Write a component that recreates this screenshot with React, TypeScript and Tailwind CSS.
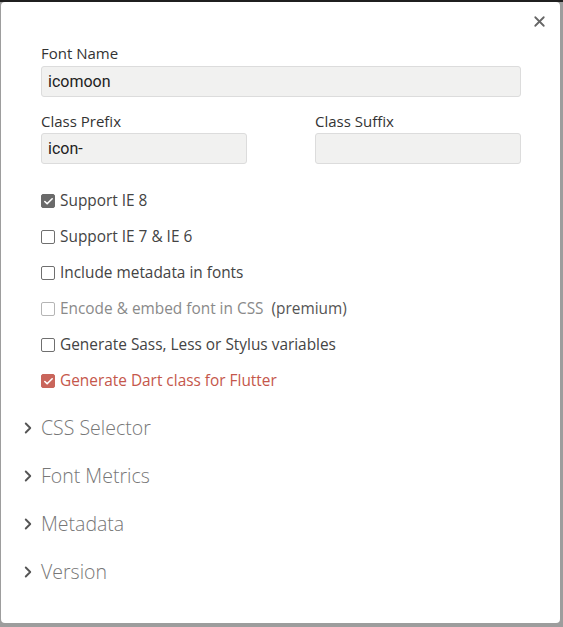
import { ChevronRight, X, Check } from 'lucide-react'

type Opt = {
  label: React.ReactNode
  checked?: boolean
  tone?: 'dark' | 'red' | 'disabled'
}

const options: Opt[] = [
  { label: 'Support IE 8', checked: true, tone: 'dark' },
  { label: 'Support IE 7 & IE 6' },
  { label: 'Include metadata in fonts' },
  {
    label: (
      <>
        Encode &amp; embed font in CSS <span className="ml-1 text-[#555]">(premium)</span>
      </>
    ),
    tone: 'disabled',
  },
  { label: 'Generate Sass, Less or Stylus variables' },
  { label: 'Generate Dart class for Flutter', checked: true, tone: 'red' },
]

const sections = ['CSS Selector', 'Font Metrics', 'Metadata', 'Version']

function CheckRow({ label, checked, tone }: Opt) {
  const box = checked
    ? tone === 'red'
      ? 'bg-[#c9655b] border-[#c9655b]'
      : 'bg-[#6a6a6a] border-[#6a6a6a]'
    : tone === 'disabled'
      ? 'border-[#b5b5b5] bg-white'
      : 'border-[#6f6f6f] bg-white'
  const text =
    tone === 'red' ? 'text-[#c5574b]' : tone === 'disabled' ? 'text-[#8a8a8a]' : 'text-[#444]'

  return (
    <label className="flex h-9 items-center">
      <span
        className={`flex h-[14px] w-[14px] items-center justify-center rounded-[2px] border-[1.5px] ${box}`}
      >
        {checked && <Check className="h-[11px] w-[11px] text-white" strokeWidth={3.5} />}
      </span>
      <span className={`ml-[5px] text-[15.4px] ${text}`}>{label}</span>
    </label>
  )
}

function Field({ value, className }: { value: string; className: string }) {
  return (
    <div
      className={`flex h-[31px] items-center rounded-[3px] border border-[#dcdcdc] bg-[#f1f1f0] px-[6px] font-['Roboto'] text-[16px] text-[#222] ${className}`}
    >
      {value}
    </div>
  )
}

export default function App() {
  return (
    <div className="h-[627px] w-[563px] overflow-hidden border-t-2 border-[#1f1f1f] bg-[#9d9d9d]">
      <div className="relative ml-px flex h-[621px] w-[559px] flex-col rounded-[4px] bg-white font-['Open_Sans'] text-[#333]">
        <button className="absolute right-[12px] top-[11px]">
          <X className="h-[17px] w-[17px] text-[#666]" strokeWidth={2.5} />
        </button>

        <div className="px-10 pt-[41px]">
          <div className="text-[15px] leading-5">Font Name</div>
          <Field value="icomoon" className="mt-[3px] w-[480px]" />

          <div className="mt-[14px] flex gap-[68px]">
            <div>
              <div className="text-[15px] leading-5">Class Prefix</div>
              <Field value="icon-" className="mt-[2px] w-[206px]" />
            </div>
            <div>
              <div className="text-[15px] leading-5">Class Suffix</div>
              <Field value="" className="mt-[2px] w-[206px]" />
            </div>
          </div>

          <div className="mt-[19px]">
            {options.map((o, i) => (
              <CheckRow key={i} {...o} />
            ))}
          </div>
        </div>

        <div className="mt-[5px] pl-[18px]">
          {sections.map((s) => (
            <div key={s} className="flex h-12 items-center text-[#777]">
              <ChevronRight className="h-[18px] w-[18px] text-[#555]" strokeWidth={2.5} />
              <span className="ml-[4px] text-[19.5px] font-light">{s}</span>
            </div>
          ))}
        </div>
      </div>
    </div>
  )
}
